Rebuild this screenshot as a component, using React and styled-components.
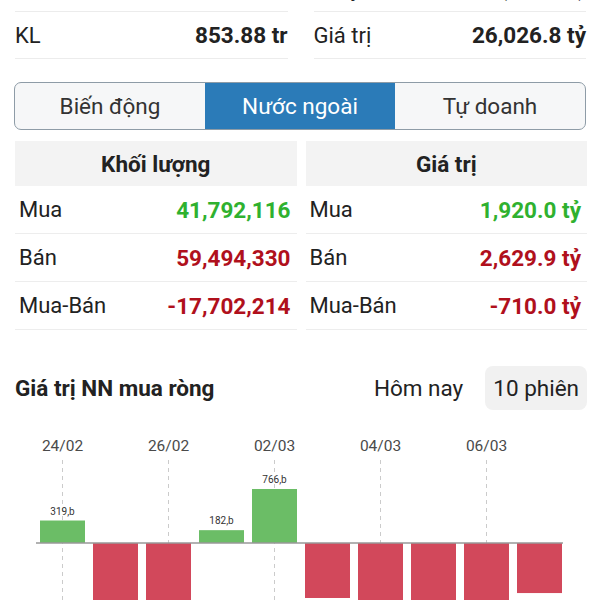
import React from "react";
import styled, { createGlobalStyle } from "styled-components";

const GlobalStyle = createGlobalStyle`
  body {
    margin: 0;
    background: #fff;
    font-family: Roboto, "Liberation Sans", sans-serif;
    color: #222;
  }
`;

const summary = [
  [
    { label: "Tham chiếu", value: "1,245.67" },
    { label: "Thay đổi", value: "-12.34 (-0.98%)" },
  ],
  [
    { label: "KL", value: "853.88 tr" },
    { label: "Giá trị", value: "26,026.8 tỷ" },
  ],
];

const tables = [
  {
    title: "Khối lượng",
    rows: [
      { label: "Mua", value: "41,792,116", tone: "up" },
      { label: "Bán", value: "59,494,330", tone: "down" },
      { label: "Mua-Bán", value: "-17,702,214", tone: "down" },
    ],
  },
  {
    title: "Giá trị",
    rows: [
      { label: "Mua", value: "1,920.0 tỷ", tone: "up" },
      { label: "Bán", value: "2,629.9 tỷ", tone: "down" },
      { label: "Mua-Bán", value: "-710.0 tỷ", tone: "down" },
    ],
  },
];

const bars = [319, -1150, -1300, 182, 766, -780, -1200, -1250, -1100, -710];
const dates = [
  { i: 0, text: "24/02" },
  { i: 2, text: "26/02" },
  { i: 4, text: "02/03" },
  { i: 6, text: "04/03" },
  { i: 8, text: "06/03" },
];

const App = () => {
  return (
    <Page>
      <GlobalStyle />
      <Summary>
        {summary.map((row, r) => (
          <SummaryRow key={r}>
            {row.map((cell) => (
              <SummaryCell key={cell.label}>
                <span>{cell.label}</span>
                <strong>{cell.value}</strong>
              </SummaryCell>
            ))}
          </SummaryRow>
        ))}
      </Summary>

      <Tabs>
        <Tab>Biến động</Tab>
        <Tab $active>Nước ngoài</Tab>
        <Tab>Tự doanh</Tab>
      </Tabs>

      <Tables>
        {tables.map((t) => (
          <Table key={t.title}>
            <TableHead>{t.title}</TableHead>
            {t.rows.map((row) => (
              <TableRow key={row.label}>
                <span>{row.label}</span>
                <Value $tone={row.tone}>{row.value}</Value>
              </TableRow>
            ))}
          </Table>
        ))}
      </Tables>

      <ChartHeader>
        <ChartTitle>Giá trị NN mua ròng</ChartTitle>
        <Range>
          <RangeButton>Hôm nay</RangeButton>
          <RangeButton $active>10 phiên</RangeButton>
        </Range>
      </ChartHeader>

      <Chart width="600" height="190" viewBox="0 0 600 190">
        {dates.map((d) => {
          const cx = 40 + d.i * 53 + 22.5;
          return (
            <g key={d.text}>
              <text x={cx} y="31" textAnchor="middle" fontSize="15.5" fill="#4a4a4a">
                {d.text}
              </text>
              <line x1={cx} y1="40" x2={cx} y2="190" stroke="#cbcbcb" strokeDasharray="4 4" />
            </g>
          );
        })}
        {bars.map((v, i) => {
          const x = 40 + i * 53;
          const h = Math.abs(v) * 0.0705;
          const zero = 123;
          return v > 0 ? (
            <g key={i}>
              <rect x={x} y={zero - h} width="45" height={h} fill="#6bbd66" />
              <text x={x + 22.5} y={zero - h - 6} textAnchor="middle" fontSize="10" fill="#333">
                {v},b
              </text>
            </g>
          ) : (
            <rect key={i} x={x} y={zero} width="45" height={h} fill="#d2485b" />
          );
        })}
        <line x1="36" y1="123" x2="563" y2="123" stroke="#999" strokeWidth="1.5" />
      </Chart>
    </Page>
  );
};

const Page = styled.div`
  width: 600px;
  height: 600px;
  overflow: hidden;
`;

const Summary = styled.div`
  margin-top: -35px;
  padding: 0 14px 0 15px;
`;

const SummaryRow = styled.div`
  display: grid;
  grid-template-columns: 1fr 1fr;
  column-gap: 26px;
`;

const SummaryCell = styled.div`
  height: 46px;
  display: flex;
  align-items: center;
  justify-content: space-between;
  border-bottom: 1px solid #ececec;
  font-size: 22px;
  span {
    color: #222;
  }
  strong {
    font-weight: 700;
    font-size: 22.5px;
    color: #222;
  }
`;

const Tabs = styled.div`
  margin: 23px 14px 0 14px;
  height: 46px;
  display: flex;
  border: 1px solid #8e9ca7;
  border-radius: 7px;
  overflow: hidden;
  background: #f6f7f8;
`;

const Tab = styled.div`
  flex: 1;
  display: flex;
  align-items: center;
  justify-content: center;
  font-size: 22.5px;
  color: ${(p) => (p.$active ? "#fff" : "#333")};
  background: ${(p) => (p.$active ? "#2b7bb8" : "transparent")};
`;

const Tables = styled.div`
  margin: 11px 13px 0 15px;
  display: grid;
  grid-template-columns: 1fr 1fr;
  column-gap: 9px;
`;

const Table = styled.div`
  display: flex;
  flex-direction: column;
`;

const TableHead = styled.div`
  height: 45px;
  display: flex;
  align-items: center;
  justify-content: center;
  background: #f3f3f3;
  font-size: 22.5px;
  font-weight: 700;
  color: #222;
`;

const TableRow = styled.div`
  height: 47px;
  display: flex;
  align-items: center;
  justify-content: space-between;
  padding: 0 6px 0 4px;
  border-bottom: 1px solid #ededed;
  font-size: 22px;
  color: #222;
`;

const Value = styled.span`
  font-weight: 700;
  font-size: 22.5px;
  color: ${(p) => (p.$tone === "up" ? "#2fb12f" : "#b0101c")};
`;

const ChartHeader = styled.div`
  margin: 36px 13px 0 15px;
  display: flex;
  align-items: center;
  justify-content: space-between;
`;

const ChartTitle = styled.div`
  font-size: 22.5px;
  font-weight: 700;
  color: #222;
`;

const Range = styled.div`
  display: flex;
  gap: 14px;
`;

const RangeButton = styled.div`
  height: 44px;
  padding: 0 8px;
  display: flex;
  align-items: center;
  border-radius: 8px;
  font-size: 22.5px;
  color: #222;
  background: ${(p) => (p.$active ? "#f1f1f1" : "transparent")};
`;

const Chart = styled.svg`
  display: block;
  margin-top: 10px;
  font-family: Roboto, "Liberation Sans", sans-serif;
`;

export default App;
